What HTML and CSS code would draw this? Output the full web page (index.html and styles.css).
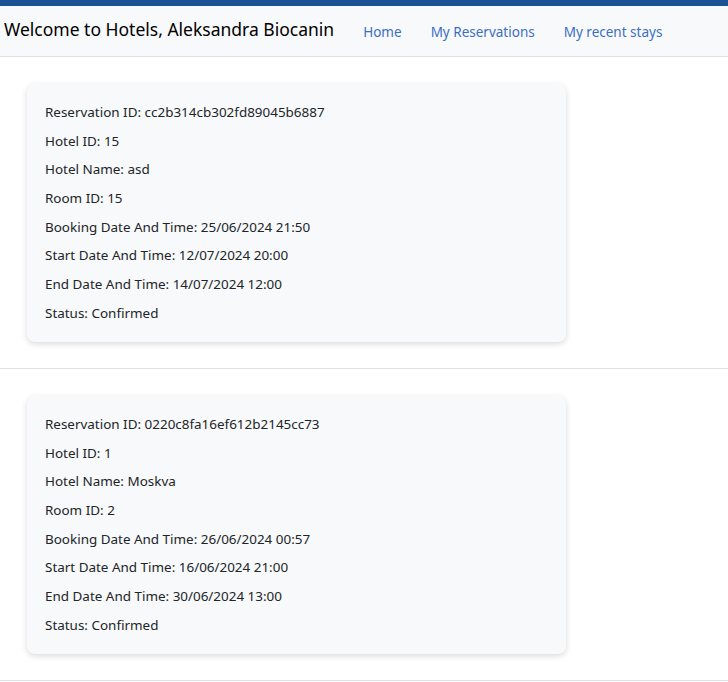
FILE: index.html
```html
<!DOCTYPE html>
<html>
<head>
<meta charset="utf-8">
<link rel="stylesheet" href="styles.css">
</head>
<body>
<div class="topbar"></div>
<nav class="navbar">
  <span class="brand">Welcome to Hotels, Aleksandra Biocanin</span>
  <a class="nav-link" href="#">Home</a>
  <a class="nav-link" href="#">My Reservations</a>
  <a class="nav-link" href="#">My recent stays</a>
</nav>
<section class="item">
  <div class="card">
    <p>Reservation ID: cc2b314cb302fd89045b6887</p>
    <p>Hotel ID: 15</p>
    <p>Hotel Name: asd</p>
    <p>Room ID: 15</p>
    <p>Booking Date And Time: 25/06/2024 21:50</p>
    <p>Start Date And Time: 12/07/2024 20:00</p>
    <p>End Date And Time: 14/07/2024 12:00</p>
    <p>Status: Confirmed</p>
  </div>
</section>
<section class="item">
  <div class="card">
    <p>Reservation ID: 0220c8fa16ef612b2145cc73</p>
    <p>Hotel ID: 1</p>
    <p>Hotel Name: Moskva</p>
    <p>Room ID: 2</p>
    <p>Booking Date And Time: 26/06/2024 00:57</p>
    <p>Start Date And Time: 16/06/2024 21:00</p>
    <p>End Date And Time: 30/06/2024 13:00</p>
    <p>Status: Confirmed</p>
  </div>
</section>
</body>
</html>
```
FILE: styles.css
```css
html, body {
  margin: 0;
  padding: 0;
  background: #ffffff;
  font-family: "Noto Sans", "Open Sans", sans-serif;
  color: #212529;
}
.topbar {
  height: 6px;
  background: #1a5296;
}
.navbar {
  height: 51px;
  display: flex;
  align-items: center;
  background: #f8f9fa;
  border-bottom: 1px solid #dee2e6;
  box-sizing: border-box;
  padding-left: 4px;
}
.brand {
  font-size: 17.5px;
  color: #000;
  margin-right: 29px;
  padding-bottom: 4px;
}
.nav-link {
  font-size: 13.5px;
  color: #3a6fc4;
  text-decoration: none;
  margin-right: 29px;
  padding-top: 2px;
}
.item {
  padding: 27px 0 26px 27px;
  border-bottom: 1px solid #dee2e6;
}
.card {
  width: 539px;
  box-sizing: border-box;
  background: #f8f9fa;
  border-radius: 8px;
  box-shadow: 0 2px 6px rgba(0,0,0,0.15);
  padding: 18px 18px 19px 18px;
  display: flex;
  flex-direction: column;
  gap: 8.7px;
}
.card p {
  margin: 0;
  font-size: 13.45px;
  line-height: 20px;
}
```
